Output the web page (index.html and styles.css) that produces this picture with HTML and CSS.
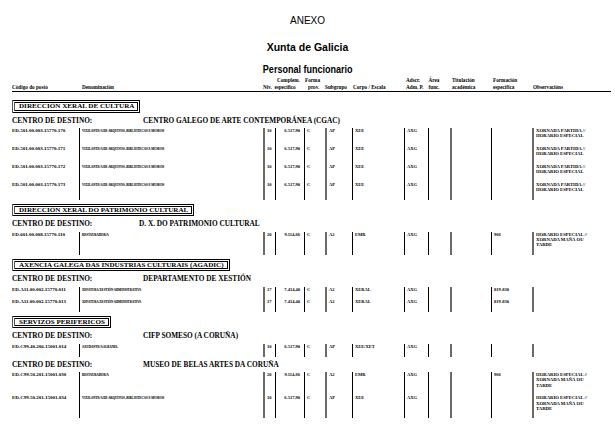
FILE: index.html
```html
<!DOCTYPE html>
<html lang="gl">
<head>
<meta charset="utf-8">
<title>Anexo - Personal funcionario</title>
<link rel="stylesheet" href="styles.css">
</head>
<body>
<div class="page">
  <div class="titles">
    <div class="t-anexo">ANEXO</div>
    <div class="t-xunta">Xunta de Galicia</div>
    <div class="t-personal"><span>Personal funcionario</span></div>
  </div>

  <div class="sheet">
    <div class="cols thead">
      <div class="h">Código do posto</div>
      <div class="h h-name">Denominación</div>
      <div class="h h-nc"><div class="h-comp">Complem.</div><div>Niv.&nbsp;&nbsp;específico</div></div>
      <div class="h h-forma"><div>Forma</div><div class="h-prov">prov.</div></div>
      <div class="h">Subgrupo</div>
      <div class="h h-corpo">Corpo / Escala</div>
      <div class="h h-adsc"><div class="h-sub"><div>Adscr.</div><div>Adm. P.</div></div><div class="h-sub"><div>Área</div><div>func.</div></div></div>
      <div class="h h-pad">Titulación<br>académica</div>
      <div class="h h-pad">Formación<br>específica</div>
      <div class="h h-obs">Observacións</div>
    </div>

    <!-- Dirección Xeral de Cultura -->
    <div class="sec sec-first"><span class="sec-box">DIRECCIÓN XERAL DE CULTURA</span></div>
    <div class="centro"><span>CENTRO DE DESTINO:</span><span>CENTRO GALEGO DE ARTE CONTEMPORÁNEA (CGAC)</span></div>
    <div class="cols row">
      <div class="c code">ED.501.00.003.15770.170</div><div class="c name"><span>VIXILANTE/A DE ARQUIVOS, BIBLIOTECAS E MUSEOS</span></div><div class="c g">10</div><div class="c num">6.517,90</div><div class="c">C</div><div class="c g">AP</div><div class="c">XEE</div><div class="c">AXG</div><div class="c"></div><div class="c g"></div><div class="c"></div><div class="c g obs">XORNADA PARTIDA //<br>HORARIO ESPECIAL</div>
    </div>
    <div class="cols row">
      <div class="c code">ED.501.00.003.15770.171</div><div class="c name"><span>VIXILANTE/A DE ARQUIVOS, BIBLIOTECAS E MUSEOS</span></div><div class="c g">10</div><div class="c num">6.517,90</div><div class="c">C</div><div class="c g">AP</div><div class="c">XEE</div><div class="c">AXG</div><div class="c"></div><div class="c g"></div><div class="c"></div><div class="c g obs">XORNADA PARTIDA //<br>HORARIO ESPECIAL</div>
    </div>
    <div class="cols row">
      <div class="c code">ED.501.00.003.15770.172</div><div class="c name"><span>VIXILANTE/A DE ARQUIVOS, BIBLIOTECAS E MUSEOS</span></div><div class="c g">10</div><div class="c num">6.517,90</div><div class="c">C</div><div class="c g">AP</div><div class="c">XEE</div><div class="c">AXG</div><div class="c"></div><div class="c g"></div><div class="c"></div><div class="c g obs">XORNADA PARTIDA //<br>HORARIO ESPECIAL</div>
    </div>
    <div class="cols row">
      <div class="c code">ED.501.00.003.15770.173</div><div class="c name"><span>VIXILANTE/A DE ARQUIVOS, BIBLIOTECAS E MUSEOS</span></div><div class="c g">10</div><div class="c num">6.517,90</div><div class="c">C</div><div class="c g">AP</div><div class="c">XEE</div><div class="c">AXG</div><div class="c"></div><div class="c g"></div><div class="c"></div><div class="c g obs">XORNADA PARTIDA //<br>HORARIO ESPECIAL</div>
    </div>

    <!-- Patrimonio -->
    <div class="sec"><span class="sec-box">DIRECCIÓN XERAL DO PATRIMONIO CULTURAL</span></div>
    <div class="centro"><span>CENTRO DE DESTINO:</span><span class="centro-dx">D. X. DO PATRIMONIO CULTURAL</span></div>
    <div class="cols row">
      <div class="c code">ED.601.00.008.15770.110</div><div class="c name"><span>RESTAURADOR/A</span></div><div class="c g">20</div><div class="c num">9.114,66</div><div class="c">C</div><div class="c g">A2</div><div class="c">EMR</div><div class="c">AXG</div><div class="c"></div><div class="c g"></div><div class="c">966</div><div class="c g obs">HORARIO ESPECIAL //<br>XORNADA MAÑÁ OU<br>TARDE</div>
    </div>

    <!-- AGADIC -->
    <div class="sec"><span class="sec-box">AXENCIA GALEGA DAS INDUSTRIAS CULTURAIS (AGADIC)</span></div>
    <div class="centro"><span>CENTRO DE DESTINO:</span><span>DEPARTAMENTO DE XESTIÓN</span></div>
    <div class="cols row">
      <div class="c code">ED.A11.00.002.15770.011</div><div class="c name"><span>XEFATURA XESTIÓN ADMINISTRATIVA</span></div><div class="c g">17</div><div class="c num">7.414,40</div><div class="c">C</div><div class="c g">A2</div><div class="c">XERAL</div><div class="c">AXG</div><div class="c"></div><div class="c g"></div><div class="c">819-830</div><div class="c g obs"></div>
    </div>
    <div class="cols row">
      <div class="c code">ED.A11.00.002.15770.013</div><div class="c name"><span>XEFATURA XESTIÓN ADMINISTRATIVA</span></div><div class="c g">17</div><div class="c num">7.414,40</div><div class="c">C</div><div class="c g">A2</div><div class="c">XERAL</div><div class="c">AXG</div><div class="c"></div><div class="c g"></div><div class="c">819-830</div><div class="c g obs"></div>
    </div>

    <!-- Servizos periféricos -->
    <div class="sec"><span class="sec-box">SERVIZOS PERIFERICOS</span></div>
    <div class="centro"><span>CENTRO DE DESTINO:</span><span>CIFP SOMESO (A CORUÑA)</span></div>
    <div class="cols row">
      <div class="c code">ED.C99.40.206.15001.014</div><div class="c name"><span>AXUDANTE/A ALBANEL</span></div><div class="c g">10</div><div class="c num">6.517,90</div><div class="c">C</div><div class="c g">AP</div><div class="c">XEE/XET</div><div class="c">AXG</div><div class="c"></div><div class="c g"></div><div class="c"></div><div class="c g obs"></div>
    </div>
    <div class="centro"><span>CENTRO DE DESTINO:</span><span>MUSEO DE BELAS ARTES DA CORUÑA</span></div>
    <div class="cols row">
      <div class="c code">ED.C99.50.201.15001.030</div><div class="c name"><span>RESTAURADOR/A</span></div><div class="c g">20</div><div class="c num">9.114,66</div><div class="c">C</div><div class="c g">A2</div><div class="c">EMR</div><div class="c">AXG</div><div class="c"></div><div class="c g"></div><div class="c">966</div><div class="c g obs">HORARIO ESPECIAL //<br>XORNADA MAÑÁ OU<br>TARDE</div>
    </div>
    <div class="cols row">
      <div class="c code">ED.C99.50.201.15001.034</div><div class="c name"><span>VIXILANTE/A DE ARQUIVOS, BIBLIOTECAS E MUSEOS</span></div><div class="c g">10</div><div class="c num">6.517,90</div><div class="c">C</div><div class="c g">AP</div><div class="c">XEE</div><div class="c">AXG</div><div class="c"></div><div class="c g"></div><div class="c"></div><div class="c g obs">HORARIO ESPECIAL //<br>XORNADA MAÑÁ OU<br>TARDE</div>
    </div>
  </div>
</div>
</body>
</html>
```

FILE: styles.css
```css
* {
  box-sizing: border-box;
  margin: 0;
  padding: 0;
}

html, body {
  background: #fff;
}

body {
  color: #000;
  font-family: "Liberation Serif", "Times New Roman", serif;
}

.page {
  width: 615px;
  height: 439px;
  overflow: hidden;
}

/* ---------- titles ---------- */
.titles {
  text-align: center;
  font-family: "Liberation Sans", Arial, sans-serif;
}

.t-anexo {
  padding-top: 15px;
  font-size: 10px;
  line-height: 12px;
}

.t-xunta {
  margin-top: 14px;
  font-size: 10.5px;
  font-weight: 700;
  line-height: 12px;
}

.t-personal {
  margin-top: 10px;
  font-size: 11px;
  font-weight: 700;
  line-height: 12px;
}

.t-personal span {
  display: inline-block;
  transform: scaleX(0.82);
}

/* ---------- sheet ---------- */
.sheet {
  padding: 0 4px 0 12px;
}

.cols {
  display: grid;
  grid-template-columns: 67px 184px 12px 29px 21px 27px 52px 24px 22px 41px 41px 79px;
}

/* header */
.thead {
  margin-top: 2px;
  align-items: end;
  border-bottom: 1.5px solid #000;
  padding-bottom: 1px;
}

.h {
  font-size: 5.2px;
  font-weight: 700;
  line-height: 6.5px;
  white-space: nowrap;
}

.h-name {
  padding-left: 3px;
}

.h-nc {
  grid-column: span 2;
}

.h-comp {
  padding-left: 14px;
}

.h-forma {
  padding-left: 1px;
}

.h-prov {
  padding-left: 3px;
}

.h-corpo {
  padding-left: 1px;
}

.h-adsc {
  grid-column: span 2;
  display: flex;
  gap: 5px;
  padding-left: 2px;
}

.h-pad {
  padding-left: 2px;
}

.h-obs {
  padding-left: 1px;
}

/* section box */
.sec {
  margin-top: 4px;
  line-height: 0;
}

.sec-first {
  margin-top: 8px;
}

.sec-box {
  display: inline-block;
  border: 3px double #000;
  border-left-color: #555;
  padding: 0 3px 0 4px;
  font-size: 7.1px;
  font-weight: 700;
  line-height: 6.5px;
  white-space: nowrap;
}

/* centro de destino */
.centro {
  display: grid;
  grid-template-columns: 131px auto;
  padding: 3px 0 3.5px;
  font-size: 7.3px;
  font-weight: 700;
  line-height: 9px;
  white-space: nowrap;
}

.centro-dx {
  margin-left: -4px;
}

/* data rows */
.row {
  font-weight: 700;
}

.c {
  border-left: 1px solid #000;
  padding: 0 0 7.3px 2px;
  font-size: 4.5px;
  line-height: 5.3px;
  white-space: nowrap;
  overflow: hidden;
}

.c.g {
  border-left: 2px solid #6a6a6a;
}

.c.code {
  border-left: 0;
  padding-left: 0;
  font-size: 5px;
}

.c.name {
  font-size: 4.3px;
}

.c.name span {
  display: inline-block;
  transform: scaleX(0.72);
  transform-origin: left center;
  -webkit-text-stroke: 0.08px #000;
}

.c.num {
  padding-left: 0;
  padding-right: 4px;
  text-align: right;
}

.c.obs {
  font-size: 4.7px;
}
```
